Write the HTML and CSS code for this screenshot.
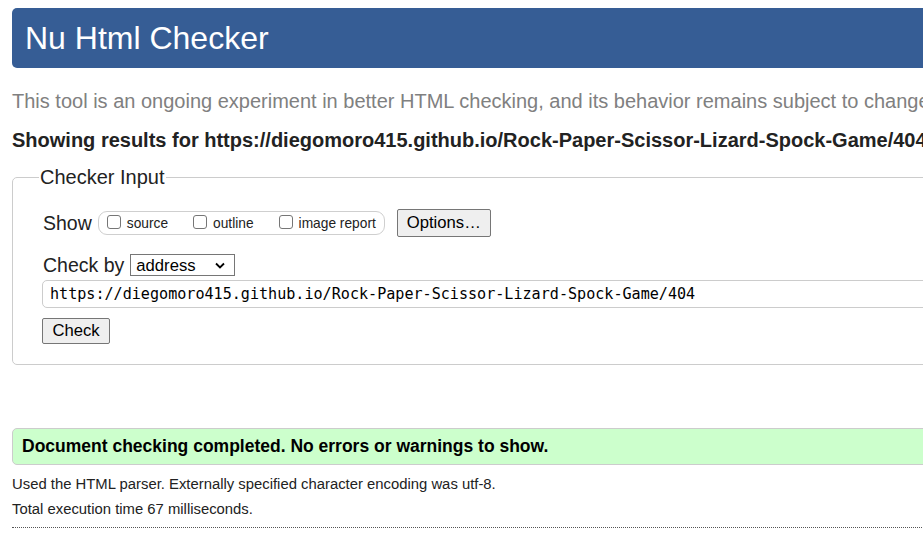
FILE: index.html
```html
<!DOCTYPE html>
<html lang="en">
<head>
<meta charset="utf-8">
<title>Showing results for https://diegomoro415.github.io/Rock-Paper-Scissor-Lizard-Spock-Game/404 - Nu Html Checker</title>
<link rel="stylesheet" href="styles.css">
</head>
<body>
<div class="page">
  <header class="banner"><h1 class="banner-title">Nu Html Checker</h1></header>
  <p class="intro">This tool is an ongoing experiment in better HTML checking, and its behavior remains subject to change.</p>
  <p class="results-for">Showing results for https://diegomoro415.github.io/Rock-Paper-Scissor-Lizard-Spock-Game/404</p>
  <form class="checker-form">
    <fieldset class="checker">
      <legend class="checker-legend">Checker Input</legend>
      <div class="show-row">
        <span class="field-label">Show</span>
        <fieldset class="show-opts">
          <label class="opt"><input type="checkbox" class="cb"><span>source</span></label>
          <label class="opt"><input type="checkbox" class="cb"><span>outline</span></label>
          <label class="opt"><input type="checkbox" class="cb"><span>image report</span></label>
        </fieldset>
        <button type="button" class="btn btn-options">Options…</button>
      </div>
      <div class="checkby-row">
        <label class="field-label" for="docselect">Check by</label>
        <select id="docselect" class="doc-select">
          <option selected>address</option>
          <option>file upload</option>
          <option>text input</option>
        </select>
      </div>
      <input class="url-input" type="url" value="https://diegomoro415.github.io/Rock-Paper-Scissor-Lizard-Spock-Game/404">
      <div class="submit-row"><button type="button" class="btn btn-check">Check</button></div>
    </fieldset>
  </form>
  <div class="success"><p class="success-text">Document checking completed. No errors or warnings to show.</p></div>
  <p class="details">Used the HTML parser. Externally specified character encoding was utf-8.</p>
  <p class="details">Total execution time 67 milliseconds.</p>
  <hr class="dotted-rule">
</div>
</body>
</html>
```
FILE: styles.css
```css
html, body {
  margin: 0;
  padding: 0;
  overflow: hidden;
  background: #fff;
}
body {
  font-family: "Liberation Sans", Arial, sans-serif;
  font-size: 20px;
  color: #222;
}
.page {
  width: 1400px;
  padding: 8px 0 0 12px;
}
.banner {
  height: 60px;
  background: #365d95;
  border-radius: 5px;
  display: flex;
  align-items: center;
  padding-left: 13px;
}
.banner-title {
  margin: 0;
  font-size: 32px;
  font-weight: normal;
  color: #fff;
  line-height: 36px;
}
.intro {
  margin: 21px 0 0;
  line-height: 24px;
  color: #808080;
  white-space: nowrap;
}
.results-for {
  margin: 15px 0 0;
  line-height: 24px;
  font-weight: bold;
  color: #222;
  white-space: nowrap;
}
.checker-form {
  margin: 13px 0 0;
}
.checker {
  margin: 0;
  border: 1px solid #cccccc;
  border-radius: 5px;
  padding: 20px 0 20px 30px;
  min-width: 0;
}
.checker-legend {
  font-size: 20px;
  line-height: 24px;
  padding: 0 1px;
  margin-left: -4px;
  color: #222;
}
.show-row {
  display: flex;
  align-items: center;
  height: 28px;
}
.field-label {
  font-size: 19.5px;
  line-height: 24px;
  color: #222;
}
.show-opts {
  margin: 0 0 0 6px;
  padding: 0 8px 0 8px;
  height: 22px;
  border: 1px solid #cfcfcf;
  border-radius: 9px;
  display: flex;
  align-items: center;
  min-width: 0;
}
.opt {
  display: flex;
  align-items: center;
  font-size: 13.75px;
  color: #222;
  margin-right: 25px;
}
.opt:last-child {
  margin-right: 0;
}
.cb {
  appearance: none;
  -webkit-appearance: none;
  width: 14px;
  height: 14px;
  margin: -3px 6px 0 0;
  border: 1px solid #767676;
  border-radius: 3px;
  background: #fff;
  box-sizing: border-box;
}
.btn {
  font-family: "Liberation Sans", Arial, sans-serif;
  font-size: 16.67px;
  color: #000;
  background: #efefef;
  border: 1px solid #767676;
  border-radius: 2px;
  padding: 0 8px;
  box-sizing: border-box;
}
.btn-options {
  margin-left: 12px;
  height: 28px;
  width: 94px;
}
.checkby-row {
  display: flex;
  align-items: center;
  height: 24px;
  margin-top: 16px;
}
.doc-select {
  appearance: none;
  -webkit-appearance: none;
  margin-left: 6px;
  width: 105px;
  height: 22px;
  box-sizing: border-box;
  border: 1px solid #767676;
  border-radius: 0;
  background: #fff url("data:image/svg+xml,%3Csvg xmlns='http://www.w3.org/2000/svg' width='10' height='7' viewBox='0 0 10 7'%3E%3Cpath d='M1 1.5l4 4 4-4' fill='none' stroke='%23000' stroke-width='1.8'/%3E%3C/svg%3E") no-repeat right 9px center;
  font-family: "Liberation Sans", Arial, sans-serif;
  font-size: 16.67px;
  color: #000;
  padding: 0 0 0 5px;
}
.url-input {
  display: block;
  margin-top: 3px;
  margin-left: -1px;
  width: 1200px;
  height: 28px;
  box-sizing: border-box;
  border: 1px solid #cccccc;
  border-radius: 5px;
  padding: 0 7px;
  font-family: "DejaVu Sans Mono", "Liberation Mono", monospace;
  font-size: 15.1px;
  color: #000;
  background: #fff;
}
.submit-row {
  margin-top: 10px;
  margin-left: -1px;
  display: flex;
}
.btn-check {
  height: 26px;
  width: 68px;
  padding: 0;
}
.success {
  margin-top: 63px;
  height: 37px;
  box-sizing: border-box;
  background: #ccffcc;
  border: 1px solid #cccccc;
  border-radius: 5px;
  display: flex;
  align-items: center;
  padding-left: 9px;
}
.success-text {
  margin: 0;
  font-size: 17.5px;
  font-weight: bold;
  color: #000;
}
.details {
  margin: 0;
  font-size: 14.85px;
  line-height: 25px;
  color: #222;
}
.success + .details {
  margin-top: 7px;
}
.dotted-rule {
  margin: 5px 0 0;
  border: 0;
  border-top: 1px dotted #555;
  height: 0;
}
```
